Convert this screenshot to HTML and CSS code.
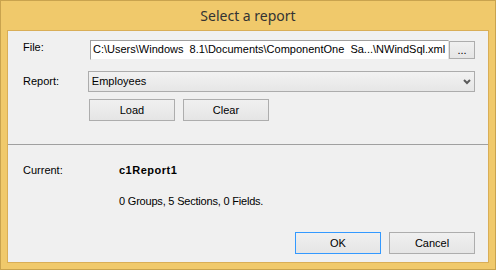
FILE: index.html
```html
<!DOCTYPE html>
<html lang="en">
<head>
<meta charset="UTF-8" />
<title>Select a report</title>
<link rel="stylesheet" href="styles.css">
</head>
<body>

<div class="window">
    <div class="titlebar">Select a report</div>

    <div class="client">
        <div class="row file-row">
            <label class="label file-label">File:</label>
            <div class="textbox">C:\Users\Windows  8.1\Documents\ComponentOne  Sa...\NWindSql.xml</div>
            <button class="btn btn-browse">...</button>
        </div>

        <div class="row report-row">
            <label class="label report-label">Report:</label>
            <div class="combo">
                <span>Employees</span>
                <svg class="chevron" width="8" height="6" viewBox="0 0 8 6">
                    <polyline points="1,1 4,4 7,1" fill="none" stroke="#5a5a5a" stroke-width="2" />
                </svg>
            </div>
        </div>

        <div class="row actions">
            <button class="btn">Load</button>
            <button class="btn">Clear</button>
        </div>

        <div class="separator"></div>

        <!-- Report info -->
        <div class="info">
            <span class="label info-label">Current:</span>
            <div class="info-body">
                <div class="report-name">c1Report1</div>
                <div class="report-stats">0 Groups, 5 Sections, 0 Fields.</div>
            </div>
        </div>

        <div class="footer">
            <button class="btn btn-default">OK</button>
            <button class="btn">Cancel</button>
        </div>
    </div>
</div>

</body>
</html>
```

FILE: styles.css
```css
body {
    margin: 0;
    padding: 0;
    font-family: 'Liberation Sans', Arial, sans-serif;
    font-size: 11px;
    color: #000;
}

.window {
    width: 496px;
    height: 270px;
    box-sizing: border-box;
    border: 1px solid #c9a34e;
    background-color: #f0c96b;
    padding: 0 6px 6px 6px;
    display: flex;
    flex-direction: column;
}

.titlebar {
    height: 29px;
    line-height: 29px;
    text-align: center;
    font-family: 'Noto Sans', 'Open Sans', sans-serif;
    font-size: 14px;
    color: #333;
}

.client {
    flex: 1;
    border: 1px solid #d9ae57;
    background-color: #f0f0f0;
    padding: 9px 13px 8px 0;
    display: flex;
    flex-direction: column;
}

.row {
    display: flex;
    align-items: flex-start;
}

.label {
    box-sizing: border-box;
    padding-left: 15px;
    line-height: 13px;
}

.file-label {
    width: 82px;
    padding-top: 1px;
}

.report-label {
    width: 80px;
    padding-top: 4px;
}

.textbox {
    width: 359px;
    height: 20px;
    box-sizing: border-box;
    border-top: 1px solid #a0a0a0;
    border-left: 1px solid #a0a0a0;
    border-right: 1px solid #e3e3e3;
    border-bottom: 1px solid #f0f0f0;
    background-color: #fff;
    padding: 2px 2px 0 2px;
    line-height: 13px;
    white-space: pre;
    overflow: hidden;
}

.btn {
    box-sizing: border-box;
    width: 86px;
    height: 22px;
    padding: 0;
    border: 1px solid #adadad;
    background: linear-gradient(#f0f0f0, #e5e5e5);
    font-family: inherit;
    font-size: 11px;
    color: #000;
}

.btn-browse {
    width: 26px;
    height: 18px;
    margin-top: 1px;
}

.btn-default {
    border-color: #3399ff;
}

.report-row {
    margin-top: 11px;
}

.combo {
    width: 388px;
    height: 21px;
    box-sizing: border-box;
    border: 1px solid #acacac;
    background: linear-gradient(#f2f2f2, #e6e6e6);
    padding: 0 3px;
    display: flex;
    align-items: center;
    line-height: 13px;
}

.chevron {
    margin-left: auto;
}

.actions {
    margin-top: 7px;
    padding-left: 81px;
    gap: 8px;
}

.separator {
    height: 1px;
    background-color: #a0a0a0;
    margin: 23px -13px 0 0;
}

.info {
    display: flex;
    margin-top: 19px;
    line-height: 13px;
}

.info-label {
    width: 111px;
}

.report-name {
    font-weight: bold;
    letter-spacing: 0.5px;
}

.report-stats {
    margin-top: 18px;
    letter-spacing: -0.2px;
}

.footer {
    margin-top: auto;
    display: flex;
    justify-content: flex-end;
    gap: 8px;
}
```
